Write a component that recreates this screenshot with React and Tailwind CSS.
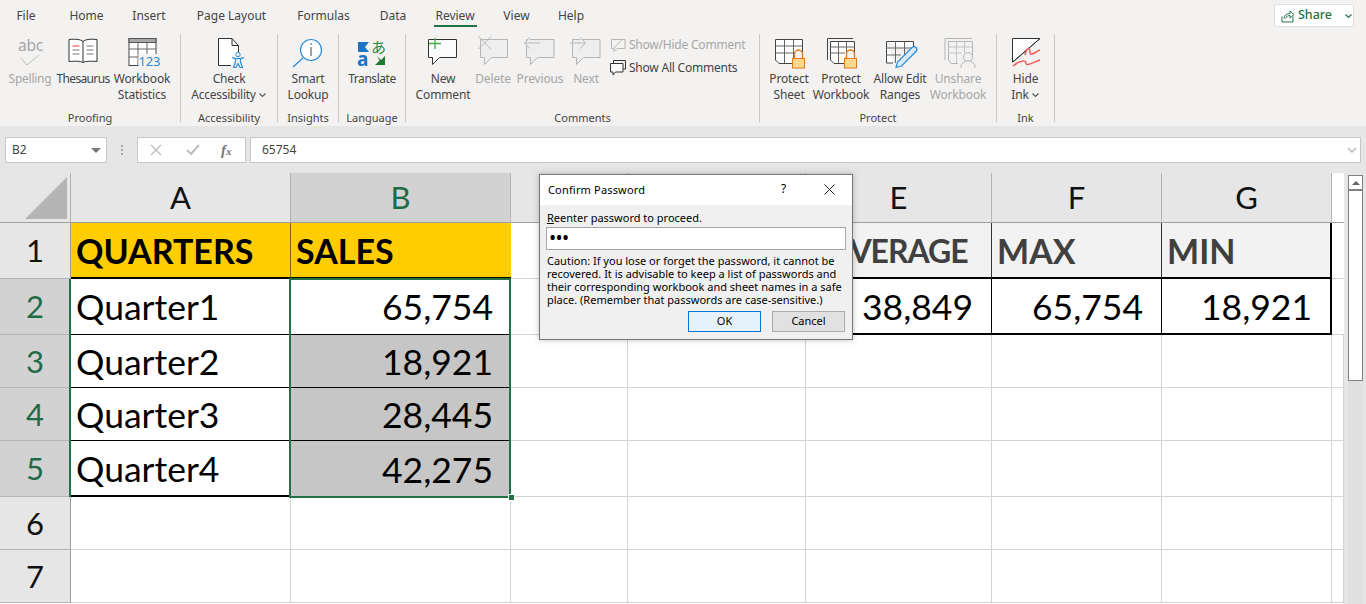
import React from "react";

const UI = "font-['Noto_Sans','Open_Sans',sans-serif]";
const SHEET = "font-['Lato',sans-serif]";

const I = ({ cx, children }) => (
  <svg width="40" height="36" viewBox={`${cx - 20} 36 40 36`} className="overflow-visible shrink-0 -mb-[1px]" fill="none">
    {children}
  </svg>
);

const bubble = (a, b, c, d) => `M${a} ${c}H${b}V${d}H${a + 11}L${a + 4} ${d + 7}V${d}H${a}Z`;

const Btn = ({ w, lines, off, chev, track = "tracking-[-0.15px]", children }) => (
  <div className={`${w} flex flex-col items-center shrink-0 text-[12px] leading-[16px] ${track} ${off ? "text-[#a6a6a6]" : "text-[#444]"}`}>
    {children}
    <div className="whitespace-nowrap">{lines[0]}</div>
    <div className="whitespace-nowrap flex items-center">
      {lines[1]}
      {chev && (
        <svg width="9" height="6" viewBox="0 0 9 6" className="ml-[2px]">
          <path d="M1.5 1.5 4.5 4.5 7.5 1.5" stroke="#555" strokeWidth="1.1" fill="none" />
        </svg>
      )}
    </div>
  </div>
);

const Group = ({ w, label, cls, children }) => (
  <div className={`${w} h-[92px] flex flex-col shrink-0`}>
    <div className={`flex pt-[2px] ${cls}`}>{children}</div>
    <div className="mt-auto h-[16px] leading-[16px] text-center text-[11px] text-[#444] whitespace-nowrap">{label}</div>
  </div>
);

const Sep = () => <div className="w-px h-[88px] bg-[#c8c8c8] shrink-0" />;

const tabs = [
  ["File", "w-[52px]"],
  ["Home", "w-[69px]"],
  ["Insert", "w-[56px]"],
  ["Page Layout", "w-[109px]"],
  ["Formulas", "w-[75px]"],
  ["Data", "w-[64px]"],
  ["Review", "w-[60px]"],
  ["View", "w-[63px]"],
  ["Help", "w-[46px]"],
];

function Ribbon() {
  return (
    <div className={`h-[126px] bg-[#f3f2f1] ${UI}`}>
      <div className="h-[34px] flex relative">
        {tabs.map(([t, w]) => (
          <div key={t} className={`${w} h-[30px] pt-[7px] text-center text-[12px] leading-[18px] text-[#444] flex flex-col items-center`}>
            <span>{t}</span>
            {t === "Review" && <span className="w-[43px] h-[2px] bg-[#217346]" />}
          </div>
        ))}
        <div className="absolute left-[1274px] top-[4px] w-[80px] h-[23px] bg-white border border-[#e1dfdd] rounded-[2px] flex items-center text-[#217346] text-[12.5px] font-medium">
          <svg width="14" height="14" viewBox="0 0 14 14" className="ml-[6px]" fill="none" stroke="#217346" strokeWidth="1">
            <path d="M1 7.5V13H12V7.5M3 9.5C3 6.5 5.5 4.5 9 4.5V2L13 5.5 9 9V6.5C7 6.5 5 7.5 4.5 9.5" />
          </svg>
          <span className="ml-[3px]">Share</span>
          <svg width="9" height="6" viewBox="0 0 9 6" className="ml-[12px]">
            <path d="M1.5 1.5 4.5 4.5 7.5 1.5" stroke="#217346" strokeWidth="1.2" fill="none" />
          </svg>
        </div>
      </div>
      <div className="flex items-start">
        <Group w="w-[180px]" label="Proofing" cls="pl-[7px]">
          <Btn w="w-[46px]" lines={["Spelling", ""]} off track="tracking-[-0.25px]">
            <I cx={30}>
              <text x="30.5" y="50.5" textAnchor="middle" fontSize="15.5" fill="#a6a6a6" fontFamily="Noto Sans">abc</text>
              <path d="M21 58 27 65 39 55" stroke="#bdbdbd" strokeWidth="1" />
            </I>
          </Btn>
          <Btn w="w-[60px]" lines={["Thesaurus", ""]} track="tracking-[-0.65px]">
            <I cx={83.5}>
              <path d="M83.5 62.5C81 61 75 61 69.5 61.5V39.5C75 39 81 39 83.5 41.5C86 39 92 39 97.5 39.5V61.5C92 61 86 61 83.5 62.5ZM83.5 41.5V62.5" stroke="#333" fill="#fff" />
              <path d="M73 46H80" stroke="#e03c31" />
              <path d="M73 50H80M73 54H80M87 46H94M87 50H94M87 54H94" stroke="#777" />
            </I>
          </Btn>
          <Btn w="w-[58px]" lines={["Workbook", "Statistics"]}>
            <I cx={142.5}>
              <rect x="129.5" y="38.5" width="27" height="27" fill="#fff" stroke="#444" />
              <rect x="129.5" y="38.5" width="27" height="4" fill="#a8a8a8" stroke="#555" />
              <path d="M129.5 49H156.5M129.5 57H139M138.5 42.5V65M147.5 42.5V54" stroke="#666" />
              <rect x="139" y="54" width="19" height="13" fill="#f3f2f1" />
              <text x="139" y="65.5" fontSize="13" fill="#2b8cd8" fontFamily="Noto Sans">123</text>
            </I>
          </Btn>
        </Group>
        <Sep />
        <Group w="w-[96px]" label="Accessibility" cls="justify-center">
          <Btn w="w-[90px]" lines={["Check", "Accessibility"]} chev track="tracking-[-0.25px]">
            <I cx={229}>
              <path d="M231 65.5H218.5V38.5H232L238.5 45.5V52M232 38.5V45.5H238.5" stroke="#333" fill="#fff" />
              <circle cx="238" cy="54.5" r="2.2" stroke="#2b8cd8" />
              <path d="M232 57.5C234 59 242 59 244 57.5M235.5 59V62L233.5 67.5H236L238 63.5L240 67.5H242.5L240.5 62V59" stroke="#2b8cd8" strokeWidth="1.2" fill="#f3f2f1" />
            </I>
          </Btn>
        </Group>
        <Sep />
        <Group w="w-[60px]" label="Insights" cls="justify-center">
          <Btn w="w-[56px]" lines={["Smart", "Lookup"]} track="tracking-[-0.2px]">
            <I cx={308}>
              <circle cx="311" cy="50" r="10.5" stroke="#2b8cd8" strokeWidth="1.2" fill="#fff" />
              <path d="M303 58 293 67" stroke="#2b8cd8" strokeWidth="1.3" />
              <path d="M311 47V56" stroke="#444" />
              <circle cx="311" cy="44" r="0.8" fill="#444" />
            </I>
          </Btn>
        </Group>
        <Sep />
        <Group w="w-[66px]" label="Language" cls="justify-center">
          <Btn w="w-[60px]" lines={["Translate", ""]} track="tracking-[-0.45px]">
            <I cx={372}>
              <path d="M358 42V52H369L365 47 369 42Z" fill="#1e74c4" />
              <text x="357" y="66" fontSize="19" fontWeight="bold" fill="#1e74c4" fontFamily="Noto Sans">a</text>
              <text x="371" y="53" fontSize="15" fill="#1d8a3a" fontFamily="Noto Sans CJK JP">あ</text>
              <path d="M375 65H385V56L381 60 377 56 379.5 60.5Z" fill="#1d7a33" />
            </I>
          </Btn>
        </Group>
        <Sep />
        <Group w="w-[353px]" label="Comments" cls="pl-[5px]">
          <Btn w="w-[64px]" lines={["New", "Comment"]}>
            <I cx={443}>
              <path d={bubble(428.5, 456.5, 39.5, 57.5)} stroke="#333" fill="#fbfbfb" />
              <path d="M435 38V49M429 43.5H441" stroke="#45ad4e" strokeWidth="1.3" />
            </I>
          </Btn>
          <Btn w="w-[36px]" lines={["Delete", ""]} off>
            <I cx={493}>
              <path d={bubble(480.5, 507.5, 39.5, 57.5)} stroke="#b5b5b5" fill="#eeeeee" />
              <path d="M478.5 36.5 491 49M491 36.5 478.5 49" stroke="#b5b5b5" />
            </I>
          </Btn>
          <Btn w="w-[58px]" lines={["Previous", ""]} off>
            <I cx={540}>
              <path d={bubble(526.5, 554, 39.5, 57.5)} stroke="#b5b5b5" fill="#eeeeee" />
              <path d="M540 43H525M530 37.5 524.5 43 530 48.5" stroke="#b5b5b5" fill="#f3f2f1" />
            </I>
          </Btn>
          <Btn w="w-[34px]" lines={["Next", ""]} off>
            <I cx={586}>
              <path d={bubble(572.5, 600, 39.5, 57.5)} stroke="#b5b5b5" fill="#eeeeee" />
              <path d="M570 43H585M580 37.5 585.5 43 580 48.5" stroke="#b5b5b5" fill="#f3f2f1" />
            </I>
          </Btn>
          <div className="ml-[4px] flex flex-col text-[12px] leading-[16px] pl-[3px] tracking-[-0.22px]">
            <div className="h-[16px] mt-[1px] flex items-center gap-[3px] text-[#a6a6a6] whitespace-nowrap">
              <svg width="16" height="15" viewBox="0 0 16 15" fill="none" stroke="#b5b5b5" className="shrink-0">
                <path d="M1.5 1.5H15V10.5H7L4 13.5V10.5H1.5ZM4 10 12 1.5" />
              </svg>
              Show/Hide Comment
            </div>
            <div className="h-[16px] mt-[7px] flex items-center gap-[3px] text-[#444] whitespace-nowrap">
              <svg width="16" height="16" viewBox="0 0 16 16" fill="none" stroke="#333" className="shrink-0">
                <path d="M3.5 3V.5H15.5V9H13" />
                <path d="M.5 3.5H13V12H5.5L3 15V12H.5Z" fill="#fbfbfb" />
              </svg>
              Show All Comments
            </div>
          </div>
        </Group>
        <Sep />
        <Group w="w-[236px]" label="Protect" cls="pl-[3px]">
          <Btn w="w-[52px]" lines={["Protect", "Sheet"]}>
            <I cx={789}>
              <path d="M775.5 39.5H802.5V58H793V63.5H779L775.5 60Z" stroke="#444" fill="#fff" />
              <path d="M775.5 46H802.5M775.5 53H793M784.5 39.5V63M793.5 39.5V58" stroke="#666" />
              <path d="M794.5 58V54A4 4 0 0 1 802.5 54V58" stroke="#e07a16" strokeWidth="1.3" fill="#f3f2f1" />
              <rect x="792.5" y="58.5" width="12" height="9.5" fill="#fbd88f" stroke="#e07a16" />
            </I>
          </Btn>
          <Btn w="w-[52px]" lines={["Protect", "Workbook"]}>
            <I cx={841}>
              <path d="M827.5 60V38.5H853" stroke="#444" />
              <path d="M830.5 41.5H854.5V58H845V63.5H834L830.5 60Z" stroke="#444" fill="#fff" />
              <path d="M830.5 47H854.5M830.5 53H845M838.5 41.5V63M846.5 41.5V58" stroke="#666" />
              <path d="M846.5 58V54A4 4 0 0 1 854.5 54V58" stroke="#e07a16" strokeWidth="1.3" fill="#f3f2f1" />
              <rect x="844.5" y="58.5" width="12" height="9.5" fill="#fbd88f" stroke="#e07a16" />
            </I>
          </Btn>
          <Btn w="w-[66px]" lines={["Allow Edit", "Ranges"]} track="tracking-[-0.2px]">
            <I cx={900}>
              <path d="M886.5 41.5H913.5V50M893 63H886.5V41.5" stroke="#444" fill="#fff" />
              <path d="M886.5 48H911M886.5 55H901M895.5 41.5V63M904.5 41.5V55" stroke="#666" />
              <path d="M896 67.5 897.5 62 912 47.5A2 2 0 0 1 916 51.5L901.5 66Z" stroke="#2b8cd8" strokeWidth="1.2" fill="#d9ebf9" />
            </I>
          </Btn>
          <Btn w="w-[50px]" lines={["Unshare", "Workbook"]} off>
            <I cx={958}>
              <path d="M945 60V38.5H972" stroke="#b5b5b5" />
              <path d="M948.5 41.5H972.5V55M958 63.5H951L948.5 60V41.5" stroke="#b5b5b5" fill="#f3f2f1" />
              <path d="M948.5 47H972.5M948.5 53H962M956.5 41.5V63M964.5 41.5V53" stroke="#c4c4c4" />
              <circle cx="968" cy="57" r="4.5" stroke="#b5b5b5" fill="#f3f2f1" />
              <path d="M961 68V66.5A5 4 0 0 1 975 66.5V68" stroke="#b5b5b5" fill="#f3f2f1" />
            </I>
          </Btn>
        </Group>
        <Sep />
        <Group w="w-[57px]" label="Ink" cls="justify-center">
          <Btn w="w-[50px]" lines={["Hide", "Ink"]} chev>
            <I cx={1026}>
              <path d="M1012.5 38.5H1040L1012.5 62Z" fill="#fff" stroke="#333" />
              <path d="M1013 62 1040 38.5" stroke="#333" />
              <path d="M1025 55C1027 47 1030 47 1030 52C1030 57 1035 52 1040 50" stroke="#ef5a5a" strokeWidth="1.5" />
              <path d="M1013 66C1020 60 1026 60 1026 63C1026 67 1034 62 1040 60" stroke="#ef5a5a" strokeWidth="1.5" />
            </I>
          </Btn>
        </Group>
        <Sep />
      </div>
    </div>
  );
}

function FormulaBar() {
  return (
    <div className={`h-[47px] bg-[#e6e6e6] flex items-start pt-[11px] pl-[5px] ${UI}`}>
      <div className="w-[102px] h-[26px] bg-white border border-[#c6c6c6] flex items-center pl-[6px] text-[12px] text-[#444] relative">
        B2
        <span className="ml-auto mr-[5px] w-0 h-0 border-x-[5px] border-x-transparent border-t-[5px] border-t-[#777]" />
      </div>
      <div className="w-[30px] h-[26px] flex flex-col items-center justify-center gap-[2px]">
        <span className="w-[2px] h-[2px] bg-[#a6a6a6]" />
        <span className="w-[2px] h-[2px] bg-[#a6a6a6]" />
        <span className="w-[2px] h-[2px] bg-[#a6a6a6]" />
      </div>
      <div className="w-[109px] h-[26px] bg-white border border-[#c6c6c6] flex items-center">
        <svg width="12" height="12" viewBox="0 0 12 12" className="ml-[12px]" stroke="#bdbdbd" strokeWidth="1.4" fill="none">
          <path d="M1 1 11 11M11 1 1 11" />
        </svg>
        <svg width="14" height="12" viewBox="0 0 14 12" className="ml-[24px]" stroke="#bdbdbd" strokeWidth="2" fill="none">
          <path d="M1 6 5 10 13 1" />
        </svg>
        <span className="ml-[21px] text-[15px] leading-none italic font-bold text-[#777] font-['Liberation_Serif',serif]">
          f<span className="text-[11px]">x</span>
        </span>
      </div>
      <div className="ml-[4px] w-[1111px] h-[26px] bg-white border border-[#c6c6c6] flex items-center pl-[11px] text-[12px] text-[#444]">
        65754
        <svg width="10" height="6" viewBox="0 0 10 6" className="ml-auto mr-[3px]" stroke="#bdbdbd" strokeWidth="1.5" fill="none">
          <path d="M1 1 5 5 9 1" />
        </svg>
      </div>
    </div>
  );
}

const line = "border-r border-b border-[#d4d4d4]";
const colHead = "bg-[#e6e6e6] border-r border-b border-r-[#b4b4b4] border-b-[#9e9e9e] flex items-center justify-center text-[#111] text-[31px]";
const rowHead = "border-r border-b border-r-[#9e9e9e] border-b-[#b4b4b4] flex items-center justify-center text-[31px]";
const rowOff = "bg-[#e6e6e6] text-[#111]";
const rowOn = "bg-[#d2d2d2] text-[#1f6b45]";
const txt = "flex items-center pl-[5px] pt-[1px] text-[35.5px] text-black whitespace-nowrap overflow-hidden";
const num = "flex items-center justify-end pr-[18px] pt-[1px] text-[35.5px] text-black";
const bold = "flex items-center pl-[5px] pt-[1px] text-[34px] font-bold whitespace-nowrap";

const Blank = ({ n }) => Array.from({ length: n }, (_, i) => <div key={i} className={line} />);

function Sheet() {
  return (
    <div className={`relative w-[1344px] h-[431px] bg-white grid grid-cols-[71px_220px_220px_117px_178px_186px_170px_170px_12px] grid-rows-[50px_56px_56px_53px_53px_56px_53px_53px_1px] overflow-hidden ${SHEET}`}>
      <div className="bg-[#e6e6e6] border-r border-b border-r-[#b4b4b4] border-b-[#9e9e9e] p-[4px_3px_3px_25px]">
        <div className="w-[42px] h-[42px] bg-[#b4b4b4] [clip-path:polygon(100%_0,100%_100%,0_100%)]" />
      </div>
      <div className={colHead}>A</div>
      <div className={`${colHead} !bg-[#d2d2d2] !text-[#1f6b45]`}>B</div>
      <div className={colHead} />
      <div className={colHead} />
      <div className={colHead}>E</div>
      <div className={colHead}>F</div>
      <div className={colHead}>G</div>
      <div className="bg-white border-b border-[#9e9e9e]" />

      <div className={`${rowHead} ${rowOff}`}>1</div>
      <div className={`${bold} bg-[#ffcd00] text-black border-b-2 border-black border-r border-r-[#7a6400]`}>QUARTERS</div>
      <div className={`${bold} bg-[#ffcd00] text-black border-b-2 border-black`}>SALES</div>
      <Blank n={2} />
      <div className={`${bold} bg-[#f2f2f2] text-[#404040] border-b-2 border-black border-r border-r-[#333] !pl-[24px] !text-[32px] tracking-[-1px]`}>AVERAGE</div>
      <div className={`${bold} bg-[#f2f2f2] text-[#404040] border-b-2 border-black border-r border-r-[#333]`}>MAX</div>
      <div className={`${bold} bg-[#f2f2f2] text-[#404040] border-b-2 border-black border-r-2 border-r-black`}>MIN</div>
      <div className="border-b border-[#d4d4d4]" />

      <div className={`${rowHead} ${rowOn}`}>2</div>
      <div className={`${txt} border-b border-black`}>Quarter1</div>
      <div className={`${num} border-b border-black`}>65,754</div>
      <Blank n={2} />
      <div className={`${num} border-b-2 border-black border-r border-r-black`}>38,849</div>
      <div className={`${num} border-b-2 border-black border-r border-r-black`}>65,754</div>
      <div className={`${num} border-b-2 border-black border-r-2 border-r-black`}>18,921</div>
      <div className="border-b border-[#d4d4d4]" />

      <div className={`${rowHead} ${rowOn}`}>3</div>
      <div className={`${txt} border-b border-black`}>Quarter2</div>
      <div className={`${num} bg-[#c6c6c6] border-b border-black`}>18,921</div>
      <Blank n={6} />

      <div className={`${rowHead} ${rowOn}`}>4</div>
      <div className={`${txt} border-b border-black`}>Quarter3</div>
      <div className={`${num} bg-[#c6c6c6] border-b border-black`}>28,445</div>
      <Blank n={6} />

      <div className={`${rowHead} ${rowOn}`}>5</div>
      <div className={`${txt} border-b-2 border-black`}>Quarter4</div>
      <div className={`${num} bg-[#c6c6c6]`}>42,275</div>
      <Blank n={6} />

      <div className={`${rowHead} ${rowOff}`}>6</div>
      <Blank n={8} />

      <div className={`${rowHead} ${rowOff}`}>7</div>
      <Blank n={8} />

      <div className="absolute left-[69px] top-[106px] w-[2px] h-[218px] bg-[#217346]" />
      <div className="absolute left-[289px] top-[105px] w-[222px] h-[220px] border-2 border-[#217346] pointer-events-none" />
      <div className="absolute left-[508px] top-[321px] w-[5px] h-[5px] bg-[#217346] border border-white box-content" />
    </div>
  );
}

function Scrollbar() {
  return (
    <div className="w-[22px] h-[431px] pl-[4px] pt-[2px]">
      <div className="w-[15px] h-[429px] bg-[#e0e0e0]">
        <div className="h-[206px] bg-white border border-[#808080] flex flex-col">
          <div className="h-[15px] border-b-2 border-[#808080] flex items-center justify-center">
            <span className="w-0 h-0 border-x-[4px] border-x-transparent border-b-[4px] border-b-[#666]" />
          </div>
        </div>
      </div>
    </div>
  );
}

function Dialog() {
  return (
    <div className={`absolute left-[539px] top-[174px] w-[314px] h-[166px] bg-[#f0f0f0] border border-[#777] shadow-[0_0_6px_rgba(0,0,0,0.25)] flex flex-col ${UI} text-[11px] text-black`}>
      <div className="h-[30px] bg-white flex items-center pl-[8px] shrink-0 relative">
        <span className="text-[11px] tracking-[0.17px]">Confirm Password</span>
        <span className="absolute left-[241px] top-[6px] text-[12px] leading-[16px]">?</span>
        <svg width="11" height="11" viewBox="0 0 11 11" className="absolute left-[284px] top-[9px]" stroke="#222" fill="none">
          <path d="M.5.5 10.5 10.5M10.5.5.5 10.5" />
        </svg>
      </div>
      <div className="pl-[7px] flex flex-col">
        <div className="h-[15px] mt-[5px] leading-[15px] text-[11px]">
          <span className="underline">R</span>eenter password to proceed.
        </div>
        <div className="w-[300px] h-[23px] mt-[2px] -ml-[1px] bg-white border border-[#a6a6a6] flex items-center pl-[2px] text-[19px] leading-[21px] tracking-[-0.6px]">
          •••
        </div>
        <div className="mt-[4px] text-[11px] leading-[13px] whitespace-nowrap">
          <div>Caution: If you lose or forget the password, it cannot be</div>
          <div>recovered. It is advisable to keep a list of passwords and</div>
          <div>their corresponding workbook and sheet names in a safe</div>
          <div>place. (Remember that passwords are case-sensitive.)</div>
        </div>
        <div className="flex justify-end gap-[11px] mt-[5px] pr-[7px]">
          <div className="w-[73px] h-[21px] bg-[#e5f1fb] border border-[#0078d7] flex items-center justify-center">OK</div>
          <div className="w-[73px] h-[21px] bg-[#e1e1e1] border border-[#adadad] flex items-center justify-center">Cancel</div>
        </div>
      </div>
    </div>
  );
}

export default function App() {
  return (
    <div className="relative w-[1366px] h-[604px] overflow-hidden bg-[#e6e6e6]">
      <Ribbon />
      <FormulaBar />
      <div className="flex">
        <Sheet />
        <Scrollbar />
      </div>
      <Dialog />
    </div>
  );
}
